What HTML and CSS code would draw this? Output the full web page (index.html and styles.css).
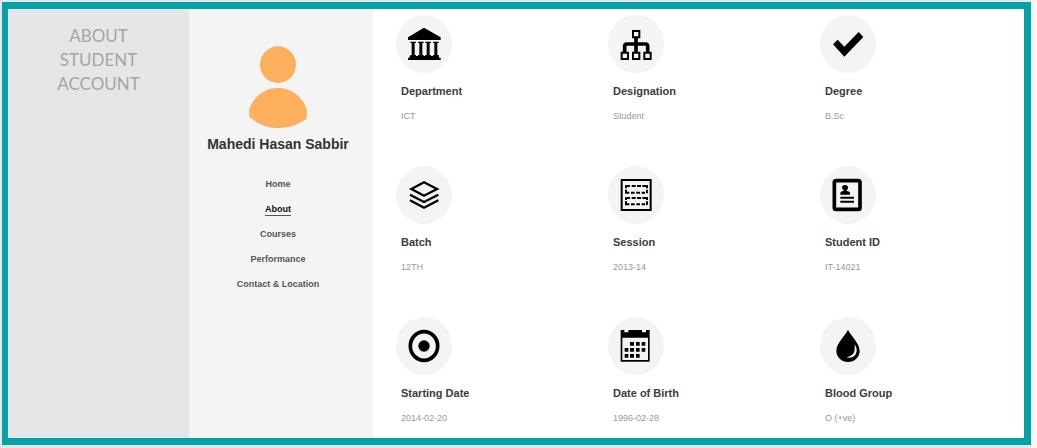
FILE: index.html
```html
<!DOCTYPE html>
<html lang="en">
<head>
<meta charset="utf-8">
<meta name="viewport" content="width=device-width, initial-scale=1">
<title>About Student Account</title>
<link rel="stylesheet" href="styles.css">
</head>
<body>
<div class="frame">
  <header class="intro"><h1 class="intro-title">ABOUT<br>STUDENT<br>ACCOUNT</h1></header>
  <aside class="sidebar">
    <svg class="avatar" viewBox="0 0 174 246" aria-hidden="true">
      <ellipse cx="87" cy="56" rx="54" ry="55"/>
      <path d="M1 190C15 150 48 126 87 126S160 150 173 190V218Q135 246 87 246T1 212Z"/>
    </svg>
    <h2 class="name">Mahedi Hasan Sabbir</h2>
    <nav class="nav">
      <a class="nav-link" href="#home">Home</a>
      <a class="nav-link active" href="#about" aria-current="page">About</a>
      <a class="nav-link" href="#courses">Courses</a>
      <a class="nav-link" href="#performance">Performance</a>
      <a class="nav-link" href="#contact">Contact &amp; Location</a>
    </nav>
  </aside>
  <main class="details">
    <section class="item">
      <svg class="icon" viewBox="0 0 168 174" aria-hidden="true"><ellipse class="disc" cx="84" cy="87" rx="84" ry="87"/>
        <path d="M84 38L134 67V75H36V67ZM43 80H60V84H56V120H60V124H43V120H47V84H43ZM66 80H83V84H79V120H83V124H66V120H70V84H66ZM88 80H105V84H101V120H105V124H88V120H92V84H88ZM111 80H128V84H124V120H128V124H111V120H115V84H111ZM41 123H129V128H134V135H36V128H41Z"/></svg>
      <h3 class="label">Department</h3><p class="value">ICT</p>
    </section>
    <section class="item">
      <svg class="icon" viewBox="0 0 168 174" aria-hidden="true"><ellipse class="disc" cx="84" cy="87" rx="84" ry="87"/>
        <g class="line"><path stroke-width="6" d="M75 48H94V67H75ZM41 113H60V132H41ZM75 113H94V132H75ZM109 113H128V132H109Z"/><path stroke-width="11" d="M84 69V111M50 111V93Q50 87 57 87H112Q119 87 119 93V111"/></g></svg>
      <h3 class="label">Designation</h3><p class="value">Student</p>
    </section>
    <section class="item">
      <svg class="icon" viewBox="0 0 168 174" aria-hidden="true"><ellipse class="disc" cx="84" cy="87" rx="84" ry="87"/>
        <path d="M39 88L53 74L73 95L116 51L130 66L73 125Z"/></svg>
      <h3 class="label">Degree</h3><p class="value">B.Sc</p>
    </section>
    <section class="item">
      <svg class="icon" viewBox="0 0 168 174" aria-hidden="true"><ellipse class="disc" cx="84" cy="87" rx="84" ry="87"/>
        <g class="line" stroke-width="7"><path d="M46 69L84 49L123 69L84 89Z"/><path d="M42 86L84 108L127 86M42 103L84 125L127 103"/></g></svg>
      <h3 class="label">Batch</h3><p class="value">12TH</p>
    </section>
    <section class="item">
      <svg class="icon" viewBox="0 0 168 174" aria-hidden="true"><ellipse class="disc" cx="84" cy="87" rx="84" ry="87"/>
        <g class="line" stroke-width="6"><path d="M41 42H128V132H41Z"/><path d="M54 60H66M71 60H83M87 60H99M103 60H117V67M54 58V67M54 71V80H64M69 80H80M85 80H96M101 80H111M117 71V82M54 96H66M71 96H83M87 96H99M103 96H117V102M54 94V102M54 106V115H64M69 115H80M85 115H96M101 115H111M117 106V117"/></g></svg>
      <h3 class="label">Session</h3><p class="value">2013-14</p>
    </section>
    <section class="item">
      <svg class="icon" viewBox="0 0 168 174" aria-hidden="true"><ellipse class="disc" cx="84" cy="87" rx="84" ry="87"/>
        <rect class="line" stroke-width="11" x="43" y="44" width="77" height="86" rx="5"/>
        <path d="M61 86V81Q61 76 71 75V72Q66 69 66 65A9 8 0 0 1 84 65Q84 70 80 72V75Q90 76 90 81V86ZM61 92H102V98H61ZM61 104H102V110H61Z"/></svg>
      <h3 class="label">Student ID</h3><p class="value">IT-14021</p>
    </section>
    <section class="item">
      <svg class="icon" viewBox="0 0 168 174" aria-hidden="true"><ellipse class="disc" cx="84" cy="87" rx="84" ry="87"/>
        <ellipse class="line" stroke-width="11" cx="84" cy="87" rx="41" ry="43"/><circle cx="84" cy="87" r="17"/></svg>
      <h3 class="label">Starting Date</h3><p class="value">2014-02-20</p>
    </section>
    <section class="item">
      <svg class="icon" viewBox="0 0 168 174" aria-hidden="true"><ellipse class="disc" cx="84" cy="87" rx="84" ry="87"/>
        <path fill-rule="evenodd" d="M38 39H49V46H61V39H102V46H114V39H125V134H38ZM43 62V129H120V62Z"/>
        <path d="M66 75H78V86H66ZM84 75H95V86H84ZM101 75H112V86H101ZM50 93H61V104H50ZM66 93H78V104H66ZM84 93H95V104H84ZM101 93H112V104H101ZM50 111H61V122H50ZM66 111H78V122H66ZM84 111H95V122H84Z"/></svg>
      <h3 class="label">Date of Birth</h3><p class="value">1996-02-28</p>
    </section>
    <section class="item">
      <svg class="icon" viewBox="0 0 168 174" aria-hidden="true"><ellipse class="disc" cx="84" cy="87" rx="84" ry="87"/>
        <path d="M84 38C91 55 119 77 119 102A35 33 0 0 1 49 102C49 77 77 55 84 38Z"/><path class="shine" d="M104 82Q114 98 108 110Q99 126 79 121Q98 117 103 104Q105 96 104 82Z"/></svg>
      <h3 class="label">Blood Group</h3><p class="value">O (+ve)</p>
    </section>
  </main>
</div>
</body>
</html>
```
FILE: styles.css
```css
* {
  box-sizing: border-box;
}

body {
  margin: 0;
  padding: 2px 6px 3px 2px;
  min-height: 100vh;
  display: flex;
  background: linear-gradient(to left, #f8f8f8 6px, #e5e6e8 6px);
  font-family: "Liberation Sans", Arial, sans-serif;
}

h1,
h2,
h3,
p {
  margin: 0;
}

.frame {
  flex: 1;
  display: grid;
  grid-template-columns: 181px 184px 1fr;
  border: 7px solid #02a2a6;
  border-left-width: 6px;
  background: #fff;
}

.intro {
  padding-top: 15px;
  background: #e5e6e8;
  text-align: center;
}

.intro-title {
  color: #a5a5a5;
  font: 400 17px/24px Lato, sans-serif;
}

.sidebar {
  display: flex;
  flex-direction: column;
  align-items: center;
  padding: 37px 6px 0 0;
  background: #f4f4f4;
}

.avatar {
  width: 58px;
  height: 82px;
  fill: #fcaf5d;
}

.name {
  padding-top: 7px;
  color: #333;
  font-size: 14px;
  line-height: 18px;
  white-space: nowrap;
}

.nav {
  display: flex;
  flex-direction: column;
  align-items: center;
  gap: 12px;
  padding-top: 25px;
}

.nav-link {
  border-bottom: 1px solid transparent;
  color: #555;
  font-size: 9px;
  font-weight: 700;
  line-height: 12px;
  text-decoration: none;
}

.active {
  border-color: #555;
  color: #111;
}

.details {
  display: grid;
  grid-template-columns: 1fr 1fr 204px;
  align-content: start;
  row-gap: 44px;
  padding: 6px 0 8px 23px;
}

.icon {
  display: block;
  width: 56px;
  height: 58px;
}

.disc {
  fill: #f4f4f4;
}

.line {
  fill: none;
  stroke: #000;
}

.shine {
  fill: #f4f4f4;
}

.label {
  padding: 10px 0 0 5px;
  color: #3c3c3c;
  font-size: 11px;
  line-height: 16px;
}

.value {
  padding: 11px 0 0 5px;
  color: #999;
  font-size: 9px;
  line-height: 12px;
}
```
